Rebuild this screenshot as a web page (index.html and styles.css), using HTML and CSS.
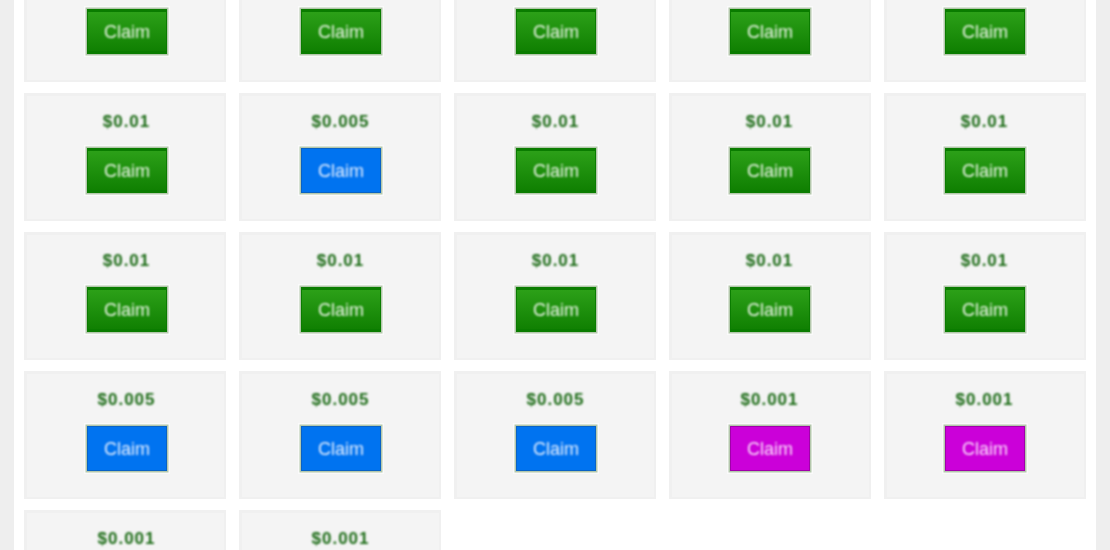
FILE: index.html
```html
<!DOCTYPE html>
<html lang="en">
<head>
  <meta charset="UTF-8">
  <title>Claim</title>
  <link rel="stylesheet" href="styles.css">
</head>
<body>
  <div class="page">
    <div class="offers">
      <div class="offer"><div class="amount">$0.01</div><a class="claim green"><span>Claim</span></a></div>
      <div class="offer"><div class="amount">$0.01</div><a class="claim green"><span>Claim</span></a></div>
      <div class="offer"><div class="amount">$0.01</div><a class="claim green"><span>Claim</span></a></div>
      <div class="offer"><div class="amount">$0.01</div><a class="claim green"><span>Claim</span></a></div>
      <div class="offer"><div class="amount">$0.01</div><a class="claim green"><span>Claim</span></a></div>

      <div class="offer"><div class="amount">$0.01</div><a class="claim green"><span>Claim</span></a></div>
      <div class="offer"><div class="amount">$0.005</div><a class="claim blue"><span>Claim</span></a></div>
      <div class="offer"><div class="amount">$0.01</div><a class="claim green"><span>Claim</span></a></div>
      <div class="offer"><div class="amount">$0.01</div><a class="claim green"><span>Claim</span></a></div>
      <div class="offer"><div class="amount">$0.01</div><a class="claim green"><span>Claim</span></a></div>

      <div class="offer"><div class="amount">$0.01</div><a class="claim green"><span>Claim</span></a></div>
      <div class="offer"><div class="amount">$0.01</div><a class="claim green"><span>Claim</span></a></div>
      <div class="offer"><div class="amount">$0.01</div><a class="claim green"><span>Claim</span></a></div>
      <div class="offer"><div class="amount">$0.01</div><a class="claim green"><span>Claim</span></a></div>
      <div class="offer"><div class="amount">$0.01</div><a class="claim green"><span>Claim</span></a></div>

      <div class="offer"><div class="amount">$0.005</div><a class="claim blue"><span>Claim</span></a></div>
      <div class="offer"><div class="amount">$0.005</div><a class="claim blue"><span>Claim</span></a></div>
      <div class="offer"><div class="amount">$0.005</div><a class="claim blue"><span>Claim</span></a></div>
      <div class="offer"><div class="amount">$0.001</div><a class="claim purple"><span>Claim</span></a></div>
      <div class="offer"><div class="amount">$0.001</div><a class="claim purple"><span>Claim</span></a></div>

      <div class="offer"><div class="amount">$0.001</div><a class="claim purple"><span>Claim</span></a></div>
      <div class="offer"><div class="amount">$0.001</div><a class="claim purple"><span>Claim</span></a></div>
    </div>
  </div>
</body>
</html>
```

FILE: styles.css
```css
html, body {
  margin: 0;
  height: 100%;
  overflow: hidden;
  background: #fff;
}
body {
  font-family: "Liberation Sans", Arial, sans-serif;
}
/* the whole shot is a soft upscale, so blur everything a little */
.page {
  display: flow-root;
  height: 100%;
  box-sizing: border-box;
  border-left: 14px solid #eeeeee;
  border-right: 14px solid #eeeeee;
  padding: 0 10px;
  filter: blur(0.6px);
}
.offers {
  display: grid;
  grid-template-columns: repeat(5, 202px);
  grid-auto-rows: 128px;
  column-gap: 13px;
  row-gap: 11px;
  margin-top: -46px;
}
.offer {
  box-sizing: border-box;
  background: #f4f4f4;
  border: 3px solid #f0f0f0;
  border-right-width: 2px;
  border-bottom-width: 2px;
  display: flex;
  flex-direction: column;
  align-items: center;
  padding-top: 16px;
  padding-left: 2px;
}
.offer:nth-child(5n+2), .offer:nth-child(5n+3) {
  padding-left: 0;
}
.offer:nth-child(5n+4), .offer:nth-child(5n) {
  padding-left: 0;
  padding-right: 2px;
}
.amount {
  font-size: 17px;
  line-height: 20px;
  letter-spacing: 1px;
  color: #1a6a14;
  font-weight: bold;
  filter: blur(1px);
}
.claim {
  display: block;
  box-sizing: border-box;
  width: 80px;
  height: 45px;
  margin-top: 16px;
  line-height: 45px;
  text-align: center;
  font-size: 18px;
  border: 1px solid transparent;
  box-shadow: 0 0 0 1.5px #b4c8ac, 0 0 0 3px rgba(255, 255, 255, 0.5);
}
.claim span {
  display: block;
  padding-left: 1px;
  filter: blur(1px);
}
.green {
  background: linear-gradient(#2ca018, #108002);
  border-color: #0a7c00;
  border-top-width: 3px;
  border-bottom-width: 3px;
  line-height: 41px;
  color: #eef6ea;
}
.blue {
  background: #0073f0;
  border-color: #0a62c4;
  color: #e4efff;
}
.purple {
  background: #cb00d9;
  border-color: #a000aa;
  color: #fbe0fc;
}
```
